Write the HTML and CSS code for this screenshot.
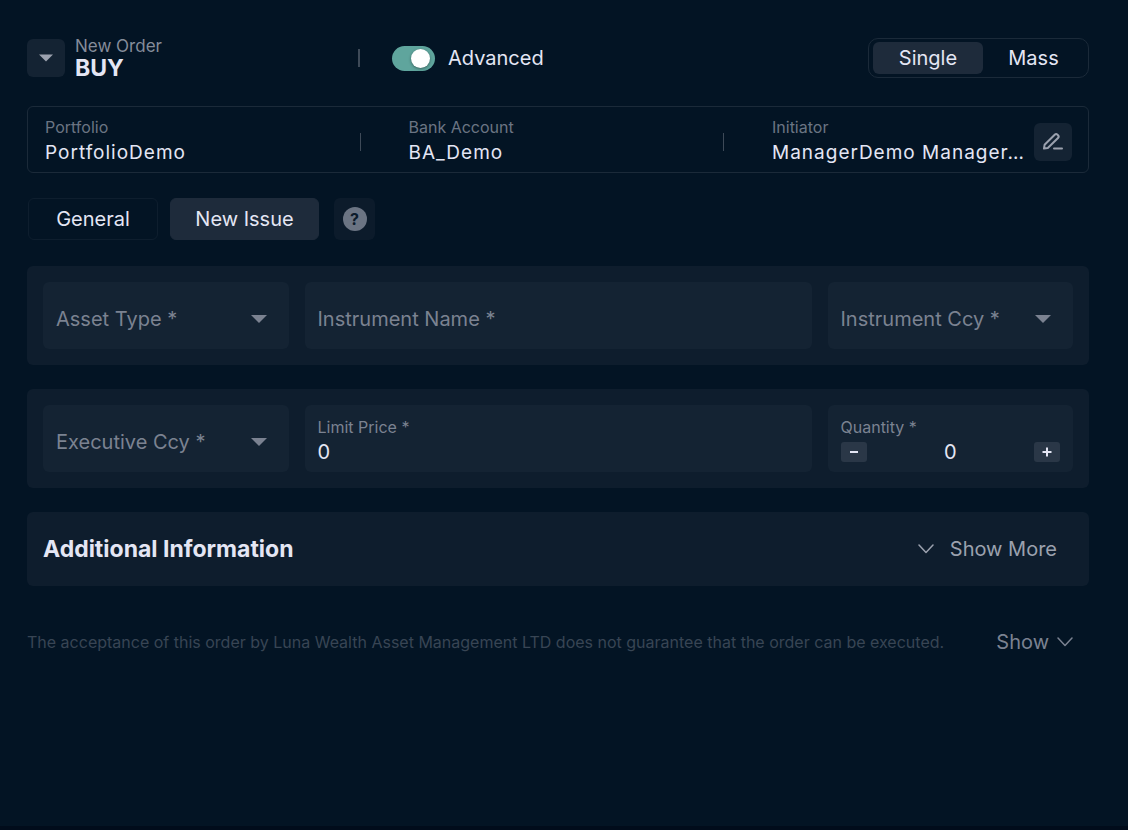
FILE: index.html
```
<!DOCTYPE html>
<html lang="en">
<head>
  <meta charset="UTF-8">
  <meta name="viewport" content="width=device-width, initial-scale=1.0">
  <title>New Order</title>
  <link rel="stylesheet" href="styles.css">
</head>
<body>
  <main class="order">
    <header class="order-header">
      <div class="order-title">
        <button type="button" class="icon-btn" aria-label="Change order side">
          <svg width="14" height="8" viewBox="0 0 14 8"><path d="M0 0.5h14L7 7.5z" fill="currentColor"/></svg>
        </button>
        <div class="order-name">
          <span class="order-kind">New Order</span>
          <h1>BUY</h1>
        </div>
        <span class="divider divider-bold"></span>
      </div>
      <label class="switch">
        <input type="checkbox" id="advanced" checked>
        <span>Advanced</span>
      </label>
      <div class="segment">
        <button type="button" class="segment-btn active">Single</button>
        <button type="button" class="segment-btn">Mass</button>
      </div>
    </header>

    <section class="info">
      <div class="info-cell">
        <div class="info-text">
          <span class="info-label">Portfolio</span>
          <span class="info-value">PortfolioDemo</span>
        </div>
        <span class="divider"></span>
      </div>
      <div class="info-cell">
        <div class="info-text">
          <span class="info-label">Bank Account</span>
          <span class="info-value">BA_Demo</span>
        </div>
        <span class="divider"></span>
      </div>
      <div class="info-cell">
        <div class="info-text">
          <span class="info-label">Initiator</span>
          <span class="info-value">ManagerDemo Manager…</span>
        </div>
        <button type="button" class="icon-btn" aria-label="Edit">
          <svg width="22" height="22" viewBox="0 0 22 22" fill="none" stroke="currentColor" stroke-width="2" stroke-linecap="round" stroke-linejoin="round"><path d="M2 17.500l.6-3.700L12.700 3.700a2 2 0 0 1 2.800 0l.5.500a2 2 0 0 1 0 2.800L5.800 17z"/><path d="M12 17.500h8"/></svg>
        </button>
      </div>
    </section>

    <nav class="tabs">
      <button type="button" class="tab">General</button>
      <button type="button" class="tab active">New Issue</button>
      <button type="button" class="help" aria-label="Help"><span>?</span></button>
    </nav>

    <form class="order-form">
      <div class="card fields">
        <div class="field select-field">
          <select id="assetType" aria-label="Asset Type">
            <option>Asset Type *</option>
          </select>
          <svg width="16" height="8" viewBox="0 0 16 8"><path d="M0 0h16L8 8z" fill="currentColor"/></svg>
        </div>
        <div class="field wide">
          <input type="text" id="instrumentName" aria-label="Instrument Name" placeholder="Instrument Name *">
        </div>
        <div class="field select-field">
          <select id="instrumentCcy" aria-label="Instrument Ccy">
            <option>Instrument Ccy *</option>
          </select>
          <svg width="16" height="8" viewBox="0 0 16 8"><path d="M0 0h16L8 8z" fill="currentColor"/></svg>
        </div>
      </div>

      <div class="card fields">
        <div class="field select-field">
          <select id="executiveCcy" aria-label="Executive Ccy">
            <option>Executive Ccy *</option>
          </select>
          <svg width="16" height="8" viewBox="0 0 16 8"><path d="M0 0h16L8 8z" fill="currentColor"/></svg>
        </div>
        <div class="field wide stacked">
          <label for="limitPrice">Limit Price *</label>
          <input type="text" id="limitPrice" inputmode="decimal" value="0">
        </div>
        <div class="field stacked">
          <label for="quantity">Quantity *</label>
          <div class="stepper">
            <button type="button" class="step" aria-label="Decrease">
              <svg width="12" height="12" viewBox="0 0 12 12" stroke="currentColor" stroke-width="2"><path d="M2 6h8"/></svg>
            </button>
            <input type="text" id="quantity" inputmode="numeric" value="0">
            <button type="button" class="step" aria-label="Increase">
              <svg width="12" height="12" viewBox="0 0 12 12" stroke="currentColor" stroke-width="2"><path d="M1.500 6h9M6 1.500v9"/></svg>
            </button>
          </div>
        </div>
      </div>

      <div class="card additional">
        <h2>Additional Information</h2>
        <button type="button" class="link-btn more">
          <svg width="16" height="10" viewBox="0 0 16 10" fill="none" stroke="currentColor" stroke-width="1.500" stroke-linecap="round" stroke-linejoin="round"><path d="M1 1l7 7.500L15 1"/></svg>
          Show More
        </button>
      </div>
    </form>

    <footer class="disclaimer">
      <p>The acceptance of this order by Luna Wealth Asset Management LTD does not guarantee that the order can be executed.</p>
      <button type="button" class="link-btn">
        Show
        <svg width="16" height="10" viewBox="0 0 16 10" fill="none" stroke="currentColor" stroke-width="1.500" stroke-linecap="round" stroke-linejoin="round"><path d="M1 1l7 7.500L15 1"/></svg>
      </button>
    </footer>
  </main>
</body>
</html>
```
FILE: styles.css
```
* {
    box-sizing: border-box;
}

body {
    margin: 0;
    background-color: #031424;
    color: #e4e6f4;
    font-family: Inter, "Open Sans", sans-serif;
    font-size: 20px;
    line-height: 24px;
}

button,
input,
select {
    margin: 0;
    padding: 0;
    border: none;
    background: none;
    color: inherit;
    font: inherit;
}

button {
    cursor: pointer;
}

svg {
    display: block;
    flex: none;
}

h1,
h2,
p {
    margin: 0;
}

.order {
    min-height: 100vh;
    padding: 36px 39px 24px 27px;
    border-bottom: 4px solid #010c1b;
}

/* header */
.order-header {
    display: grid;
    grid-template-columns: 1fr 1fr 332px;
    column-gap: 32px;
    align-items: center;
}

.order-title {
    display: flex;
    align-items: center;
    gap: 10px;
}

.order-name {
    flex: 1;
}

.order-kind {
    display: block;
    font-size: 17px;
    line-height: 20px;
    color: #858c9a;
}

h1 {
    font-size: 23px;
    line-height: 24px;
    font-weight: 700;
}

.icon-btn {
    display: flex;
    flex: none;
    align-items: center;
    justify-content: center;
    width: 38px;
    height: 38px;
    border-radius: 6px;
    background-color: #142333;
    color: #9ba1ae;
}

.divider {
    flex: none;
    width: 1px;
    height: 18px;
    background-color: #3e4a58;
}

.divider-bold {
    width: 2px;
}

.switch {
    display: flex;
    align-items: center;
    gap: 13px;
}

.switch input {
    display: flex;
    align-items: center;
    justify-content: flex-end;
    appearance: none;
    width: 43px;
    height: 25px;
    padding: 0 5px;
    border-radius: 13px;
    background-color: #5fa59d;
}

.switch input::before {
    content: "";
    width: 19px;
    height: 19px;
    border-radius: 50%;
    background-color: #fff;
    box-shadow: 0 1px 3px rgba(0, 0, 0, 0.4);
}

.segment {
    display: flex;
    justify-self: end;
    padding: 3px 4px;
    border: 1px solid #1b2a39;
    border-radius: 10px;
}

.segment-btn {
    width: 101px;
    height: 32px;
    border-radius: 6px;
}

.segment-btn.active {
    width: 110px;
    background-color: #1e2b3b;
}

/* account info */
.info {
    display: grid;
    grid-template-columns: 1fr 1fr 300px;
    column-gap: 48px;
    margin-top: 26px;
    padding: 9px 16px 5px 17px;
    border: 1px solid #1b2a39;
    border-radius: 6px;
}

.info-cell {
    display: flex;
    align-items: center;
    min-width: 0;
}

.info-text {
    flex: 1;
    min-width: 0;
}

.info-label {
    display: block;
    font-size: 16px;
    line-height: 23px;
    color: #6b7483;
}

.info-value {
    display: block;
    font-size: 19px;
    line-height: 28px;
    letter-spacing: 1px;
    white-space: nowrap;
}

/* tabs */
.tabs {
    display: flex;
    margin-top: 25px;
}

.tab {
    height: 42px;
    width: 130px;
    margin-left: 1px;
    border: 1px solid #0e1e2e;
    border-radius: 6px;
}

.tab.active {
    width: 149px;
    margin-left: 12px;
    border-color: #1e2b3b;
    background-color: #1e2b3b;
}

.help {
    display: flex;
    align-items: center;
    justify-content: center;
    width: 41px;
    height: 42px;
    margin-left: 15px;
    border-radius: 6px;
    background-color: #0c1b2b;
}

.help span {
    width: 24px;
    height: 24px;
    border-radius: 50%;
    background-color: #6b7483;
    color: #0c1b2b;
    font-size: 16px;
    font-weight: 700;
}

/* form */
.order-form {
    display: flex;
    flex-direction: column;
    gap: 24px;
    margin-top: 26px;
}

.card {
    padding: 16px;
    border-radius: 6px;
    background-color: #0e1d2d;
}

.fields {
    display: grid;
    grid-template-columns: repeat(4, 1fr);
    gap: 16px;
}

.field {
    display: flex;
    align-items: center;
    min-width: 0;
    height: 67px;
    padding: 6px 13px 0;
    border-radius: 6px;
    background-color: #142333;
}

.field.wide {
    grid-column: span 2;
}

.field input {
    width: 100%;
    min-width: 0;
    outline: none;
}

.field input::placeholder {
    color: #7b8291;
    opacity: 1;
}

.wide input {
    height: 24px;
}

.select-field {
    position: relative;
    color: #7b8291;
}

.select-field select {
    width: 100%;
    height: 61px;
    appearance: none;
    outline: none;
}

.select-field svg {
    position: absolute;
    right: 22px;
    pointer-events: none;
}

.field.stacked {
    flex-direction: column;
    align-items: stretch;
    justify-content: center;
    padding-top: 0;
}

.stacked label {
    font-size: 16px;
    line-height: 26px;
    color: #7b8291;
}

.stepper {
    display: flex;
    align-items: center;
}

.stepper input {
    flex: 1;
    height: 24px;
    text-align: center;
}

.step {
    display: flex;
    flex: none;
    align-items: center;
    justify-content: center;
    width: 26px;
    height: 20px;
    border-radius: 3px;
    background-color: #2a3747;
}

.additional {
    display: flex;
    align-items: center;
    justify-content: space-between;
    min-height: 74px;
}

h2 {
    font-size: 23px;
    line-height: 28px;
    font-weight: 700;
}

.link-btn {
    display: flex;
    flex: none;
    align-items: center;
    gap: 8px;
    color: #7b8291;
}

.more {
    gap: 16px;
    margin-right: 16px;
    color: #9ba1ae;
}

.disclaimer {
    display: flex;
    align-items: center;
    justify-content: space-between;
    gap: 16px;
    margin-top: 44px;
    padding-right: 16px;
}

.disclaimer p {
    font-size: 16px;
    color: #384554;
}
```
